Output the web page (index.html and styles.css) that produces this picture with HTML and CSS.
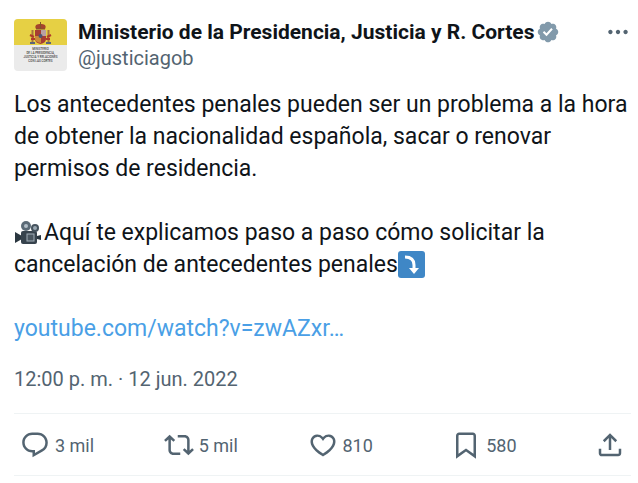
FILE: index.html
```html
<!DOCTYPE html>
<html lang="es">
<head>
    <meta charset="utf-8">
    <meta name="viewport" content="width=device-width, initial-scale=1">
    <title>Ministerio de la Presidencia, Justicia y R. Cortes</title>
    <link rel="stylesheet" href="styles.css">
</head>
<body>
    <article class="post">
        <header class="post-header">
            <a class="avatar" href="#" aria-label="Perfil">
                <svg viewBox="0 0 53 52">
                    <rect width="53" height="52" fill="#ebebeb"/>
                    <rect width="53" height="26" fill="#e6d044"/>
                    <!-- pillars -->
                    <path d="M18.500 11v13M34.500 11v13" stroke="#a8743c" stroke-width="2"/>
                    <path d="M16 16l4 2M17 20h4M33 18l4-2M32 20h4" stroke="#b03a2a" stroke-width="2"/>
                    <path d="M16 24h5M32 24h5" stroke="#5c6478" stroke-width="2"/>
                    <!-- crown -->
                    <path d="M22 10c-2-4 1-5 4.500-5s6.500 1 4.500 5z" fill="#a5432c"/>
                    <path d="M26.500 3v7M22 10h9" stroke="#80552a" stroke-width="1"/>
                    <!-- shield -->
                    <path d="M21 11h11v9q0 4-5.500 5Q21 24 21 20z" fill="#a63d33"/>
                    <path d="M27 11h5v6h-5z" fill="#b9a0a4"/>
                    <path d="M21 17h6v7q-6-1-6-4z" fill="#c98a3a"/>
                    <circle cx="26.500" cy="17" r="2" fill="#4c5573"/>
                </svg>
                <span class="avatar-text">MINISTERIO<br>DE LA PRESIDENCIA,<br>JUSTICIA Y RELACIONES<br>CON LAS CORTES</span>
            </a>
            <div class="author">
                <a class="author-name" href="#">Ministerio de la Presidencia, Justicia y R. Cortes
                    <svg class="verified" viewBox="0 0 22 22" role="img" aria-label="Cuenta verificada"><path d="M20.396 11c-.018-.646-.215-1.275-.57-1.816-.354-.54-.852-.972-1.438-1.246.223-.607.27-1.264.14-1.897-.131-.634-.437-1.218-.882-1.687-.47-.445-1.053-.75-1.687-.882-.633-.13-1.29-.083-1.897.14-.273-.587-.704-1.086-1.245-1.44S11.647 1.62 11 1.604c-.646.017-1.273.213-1.813.568s-.969.854-1.24 1.44c-.608-.223-1.267-.272-1.902-.14-.635.13-1.22.436-1.69.882-.445.47-.749 1.055-.878 1.688-.13.633-.08 1.29.144 1.896-.587.274-1.087.705-1.443 1.245-.356.54-.555 1.17-.574 1.817.02.647.218 1.276.574 1.817.356.54.856.972 1.443 1.245-.224.606-.274 1.263-.144 1.896.13.634.433 1.218.877 1.688.47.443 1.054.747 1.687.878.633.132 1.29.084 1.897-.136.274.586.705 1.084 1.246 1.439.54.354 1.17.551 1.816.569.647-.016 1.276-.213 1.817-.567s.972-.854 1.245-1.44c.604.239 1.266.296 1.903.164.636-.132 1.22-.447 1.68-.907.46-.46.776-1.044.908-1.681s.075-1.299-.165-1.903c.586-.274 1.084-.705 1.439-1.246.354-.54.551-1.17.569-1.816zM9.662 14.85l-3.429-3.428 1.293-1.302 2.072 2.072 4.4-4.794 1.347 1.246z"/></svg>
                </a>
                <a class="author-handle" href="#">@justiciagob</a>
            </div>
            <button class="more" type="button" aria-label="Más opciones">
                <svg viewBox="0 0 24 24"><path d="M3 12c0-1.100.9-2 2-2s2 .9 2 2-.9 2-2 2-2-.9-2-2zm9 2c1.100 0 2-.9 2-2s-.9-2-2-2-2 .9-2 2 .9 2 2 2zm7 0c1.100 0 2-.9 2-2s-.9-2-2-2-2 .9-2 2 .9 2 2 2z"/></svg>
            </button>
        </header>

        <div class="post-text">
            <p>Los antecedentes penales pueden ser un problema a la hora de obtener la nacionalidad española, sacar o renovar permisos de residencia.</p>
            <p><svg class="emoji" viewBox="0 0 28 28" role="img" aria-label="Cámara de cine">
                <path d="M1 14l7 4v3l-7 4z" fill="#2b3740"/>
                <path d="M23 18l4-1v5l-4-1z" fill="#2b3740"/>
                <rect x="7" y="13" width="16" height="13" rx="2" fill="#37434d"/>
                <circle cx="12" cy="8" r="5" fill="#5c6b77"/>
                <circle cx="21" cy="10" r="4" fill="#46535e"/>
                <circle cx="12" cy="8" r="2" fill="#b4c0c9"/>
                <circle cx="21" cy="10" r="2" fill="#9aa8b3"/>
                <rect x="13" y="16" width="7" height="7" fill="#4a5660" stroke="#a3b0ba"/>
            </svg>Aquí te explicamos paso a paso cómo solicitar la cancelación de antecedentes penales<svg class="emoji" viewBox="0 0 28 28" role="img" aria-label="Flecha hacia abajo">
                <rect x="0" y="1" width="27" height="27" rx="3" fill="#3f87c6"/>
                <path d="M7 7c6 0 9 3 9 8v4" fill="none" stroke="#fff" stroke-width="3"/>
                <path d="M11 18h10l-5 6z" fill="#fff"/>
            </svg></p>
            <p><a href="#">youtube.com/watch?v=zwAZxr…</a></p>
        </div>

        <a class="post-time" href="#"><time datetime="2022-06-12T12:00">12:00 p. m. · 12 jun. 2022</time></a>

        <div class="actions">
            <button type="button" aria-label="Responder">
                <svg viewBox="0 0 24 24"><path d="M1.751 10c0-4.420 3.584-8 8.005-8h4.366c4.490 0 8.129 3.640 8.129 8.130 0 2.960-1.607 5.680-4.196 7.110l-8.054 4.460v-3.690h-.067c-4.490.1-8.183-3.510-8.183-8.010zm8.005-6c-3.317 0-6.005 2.690-6.005 6 0 3.370 2.770 6.080 6.138 6.010l.351-.01h1.761v2.300l5.087-2.810c1.951-1.080 3.163-3.130 3.163-5.360 0-3.390-2.744-6.130-6.129-6.130H9.756z"/></svg>
                <span>3 mil</span>
            </button>
            <button type="button" aria-label="Repostear">
                <svg viewBox="0 0 24 24"><path d="M4.500 3.880l4.432 4.140-1.364 1.460L5.500 7.550V16c0 1.100.896 2 2 2H13v2H7.500c-2.209 0-4-1.790-4-4V7.550L1.432 9.480.068 8.020 4.500 3.880zM16.500 6H11V4h5.500c2.209 0 4 1.790 4 4v8.450l2.068-1.930 1.364 1.460-4.432 4.140-4.432-4.140 1.364-1.460 2.068 1.930V8c0-1.100-.896-2-2-2z"/></svg>
                <span>5 mil</span>
            </button>
            <button type="button" aria-label="Me gusta">
                <svg viewBox="0 0 24 24"><path d="M16.697 5.500c-1.222-.06-2.679.51-3.890 2.160l-.805 1.090-.806-1.090C9.984 6.010 8.526 5.440 7.304 5.500c-1.243.07-2.349.78-2.910 1.910-.552 1.120-.633 2.780.479 4.820 1.074 1.970 3.257 4.270 7.129 6.610 3.870-2.340 6.052-4.640 7.126-6.610 1.111-2.040 1.030-3.700.477-4.820-.561-1.130-1.666-1.840-2.908-1.910zm4.187 7.690c-1.351 2.480-4.001 5.120-8.379 7.670l-.503.3-.504-.3c-4.379-2.550-7.029-5.190-8.382-7.670-1.360-2.500-1.410-4.860-.514-6.670.887-1.790 2.647-2.910 4.601-3.010 1.651-.09 3.368.56 4.798 2.010 1.429-1.450 3.146-2.100 4.796-2.010 1.954.1 3.714 1.220 4.601 3.010.896 1.810.846 4.170-.514 6.670z"/></svg>
                <span>810</span>
            </button>
            <button type="button" aria-label="Guardar">
                <svg viewBox="0 0 24 24"><path d="M4 4.500C4 3.120 5.119 2 6.500 2h11C18.881 2 20 3.120 20 4.500v18.440l-8-5.710-8 5.710V4.500zM6.500 4c-.276 0-.5.220-.5.500v14.560l6-4.290 6 4.290V4.500c0-.280-.224-.5-.5-.5h-11z"/></svg>
                <span>580</span>
            </button>
            <button type="button" aria-label="Compartir">
                <svg viewBox="0 0 24 24"><path d="M12 2.590l5.700 5.700-1.410 1.420L13 6.410V16h-2V6.410l-3.300 3.300-1.410-1.420L12 2.590zM21 15l-.02 3.510c0 1.380-1.120 2.490-2.500 2.490H5.500C4.110 21 3 19.880 3 18.500V15h2v3.500c0 .28.22.5.5.5h12.980c.28 0 .5-.22.5-.5L19 15h2z"/></svg>
            </button>
        </div>
    </article>
</body>
</html>
```
FILE: styles.css
```css
body {
    margin: 0;
    background: #fff;
    color: #0f1419;
    font-family: Roboto, "Liberation Sans", sans-serif;
}

a {
    color: inherit;
    text-decoration: none;
}

button {
    padding: 0;
    border: 0;
    background: none;
    color: inherit;
    font: inherit;
    cursor: pointer;
}

svg {
    fill: currentColor;
}

.post {
    padding: 19px 7px 0 14px;
}

.post-header {
    display: flex;
    align-items: flex-start;
}

.avatar {
    display: grid;
    flex: none;
    width: 53px;
    height: 52px;
    border-radius: 4px;
    overflow: hidden;
}

.avatar svg,
.avatar-text {
    grid-area: 1 / 1;
}

.avatar-text {
    padding-top: 28px;
    color: #444;
    font-size: 3px;
    font-weight: 500;
    line-height: 4px;
    text-align: center;
    white-space: nowrap;
}

.author {
    flex: 1;
    min-width: 0;
    margin-left: 11px;
    font-size: 20px;
    line-height: 26px;
}

.author-name {
    display: flex;
    align-items: center;
    gap: 2px;
    font-size: 21px;
    font-weight: 700;
}

.verified {
    flex: none;
    width: 24px;
    height: 24px;
    color: #829aab;
}

.author-handle {
    display: block;
    color: #536471;
}

.more {
    color: #536471;
}

.more svg {
    display: block;
    width: 26px;
    height: 26px;
}

.post-text {
    margin-top: 18px;
    font-size: 23px;
    line-height: 32px;
}

.post-text p {
    margin: 0 0 32px;
}

.post-text p:last-child {
    margin-bottom: 20px;
}

.post-text a {
    color: #4a9fe6;
}

.emoji {
    width: 28px;
    height: 28px;
    margin-right: 2px;
    vertical-align: -6px;
}

.post-time {
    display: block;
    color: #536471;
    font-size: 20px;
    line-height: 28px;
}

.actions {
    display: grid;
    grid-template-columns: repeat(4, 1fr) auto;
    margin-top: 20px;
    padding: 16px 6px 15px;
    border: solid #eff3f4;
    border-width: 1px 0;
    color: #536471;
    font-size: 18px;
}

.actions button {
    display: flex;
    align-items: center;
    gap: 5px;
}

.actions svg {
    width: 30px;
    height: 30px;
}
```
